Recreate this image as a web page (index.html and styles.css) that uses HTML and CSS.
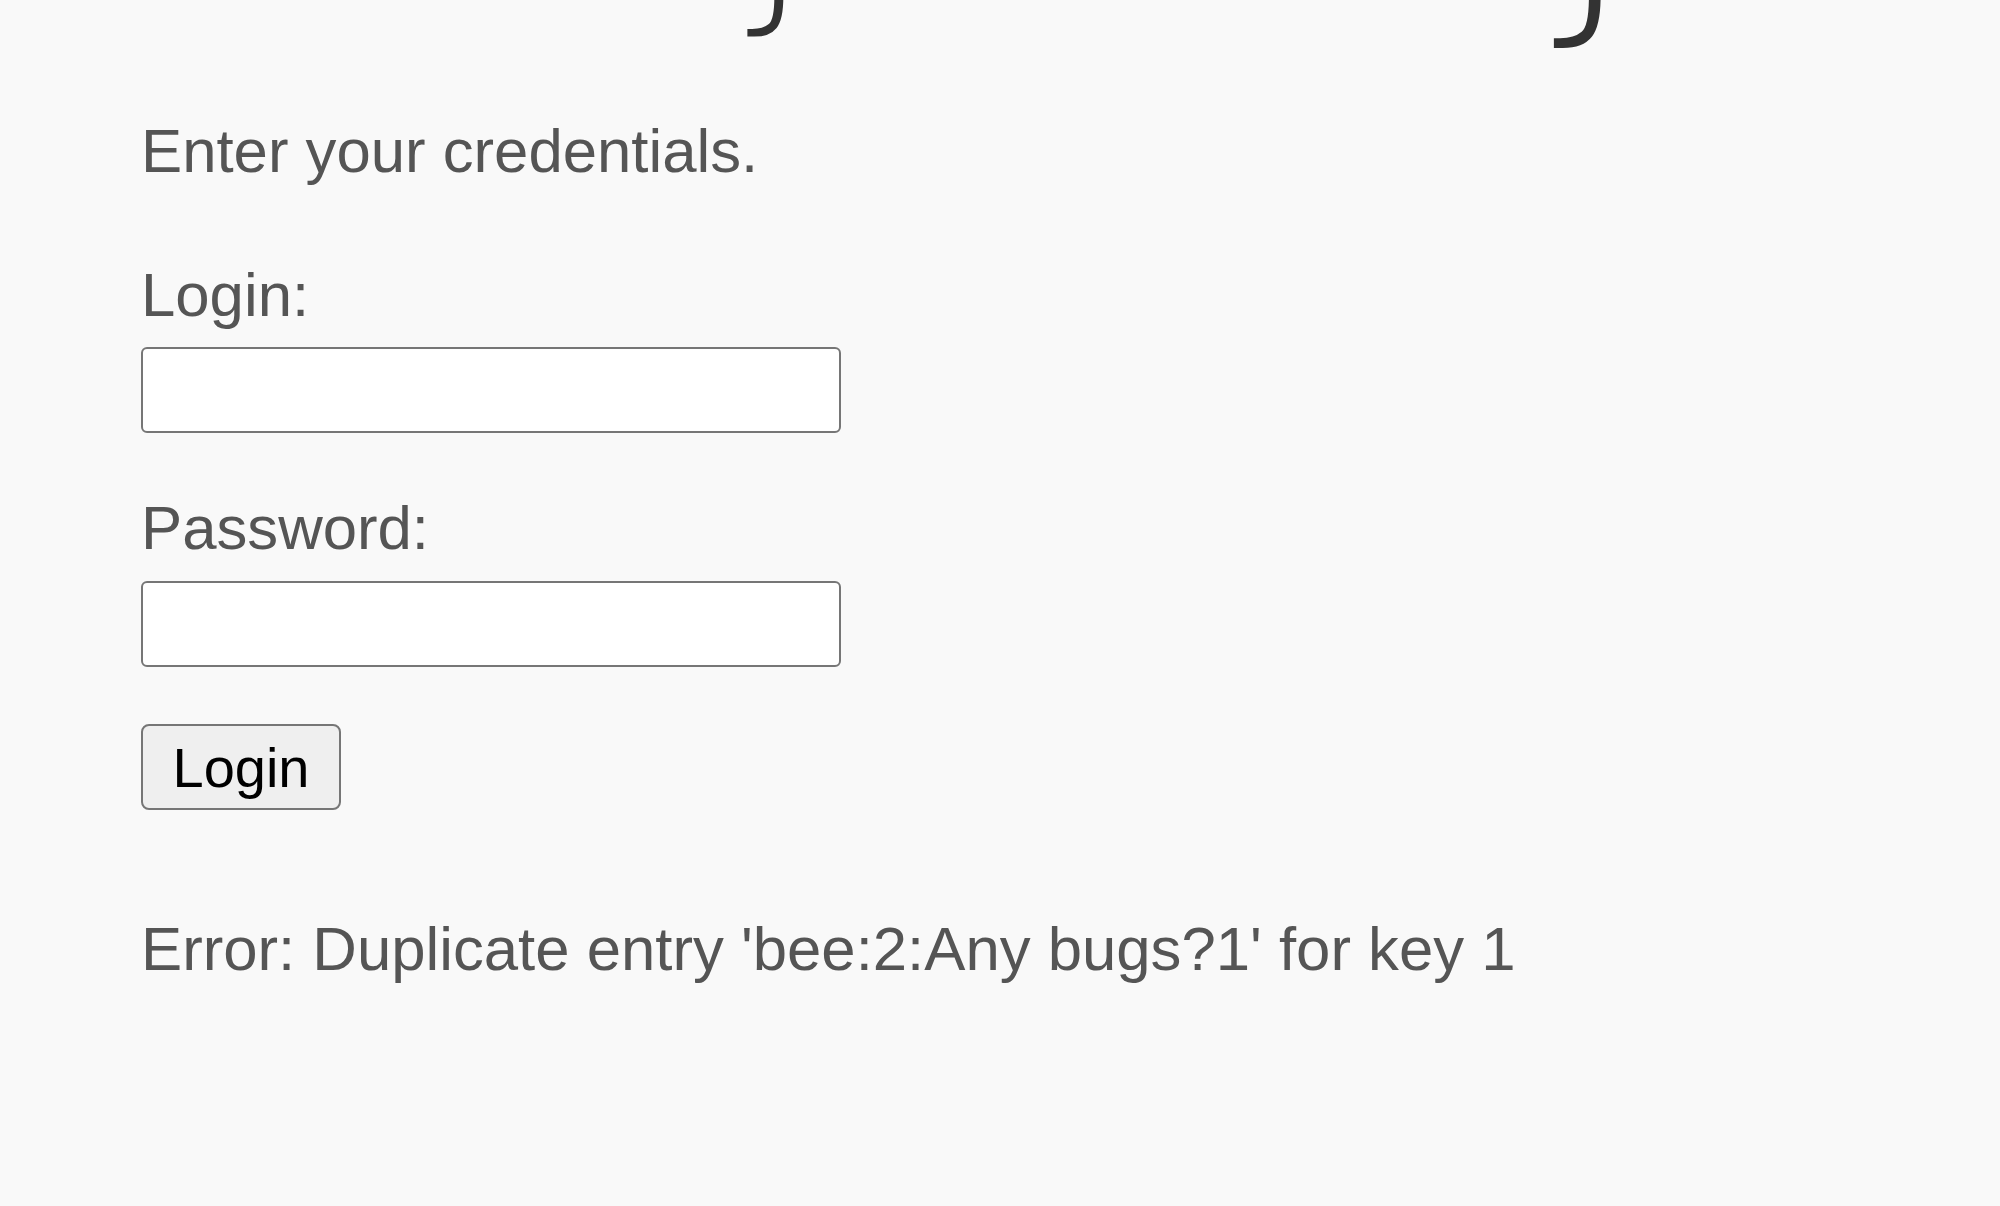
FILE: index.html
```html
<!DOCTYPE html>
<html>
<head>
<meta charset="utf-8">
<title>Login</title>
<link rel="stylesheet" href="styles.css">
</head>
<body>
<div class="page">
  <div class="heading-clip">
    <h1 class="heading"><span class="h-first">j</span><span class="h-second">j</span></h1>
  </div>
  <div class="main">
    <p class="intro">Enter your credentials.</p>
    <form class="form" action="#" method="post">
      <label class="label" for="login">Login:</label>
      <input class="field" type="text" id="login" name="login" autocomplete="off">
      <label class="label label-pass" for="password">Password:</label>
      <input class="field field-pass" type="password" id="password" name="password" autocomplete="off">
      <button class="btn" type="submit">Login</button>
    </form>
    <p class="error">Error: Duplicate entry 'bee:2:Any bugs?1' for key 1</p>
  </div>
</div>
</body>
</html>
```
FILE: styles.css
```css
html, body {
  margin: 0;
  padding: 0;
}
body {
  background: #f9f9f9;
  font-family: "Liberation Sans", Arial, sans-serif;
  color: #555555;
}
.page {
  width: 2000px;
  height: 1206px;
  overflow: hidden;
}
.heading-clip {
  height: 50px;
  overflow: hidden;
}
.heading {
  margin: 0;
  display: flex;
  align-items: flex-start;
  font-family: "DejaVu Sans", sans-serif;
  font-weight: 200;
  color: #333333;
  line-height: 1;
}
.h-first {
  display: block;
  font-size: 200px;
  margin-top: -174px;
  margin-left: 751px;
}
.h-second {
  display: block;
  font-size: 260px;
  margin-top: -226px;
  margin-left: 752px;
}
.main {
  padding-left: 141px;
}
.intro {
  margin: 65px 0 0 0;
  font-size: 61.7px;
  line-height: 71px;
}
.form {
  display: flex;
  flex-direction: column;
  align-items: flex-start;
}
.label {
  display: block;
  margin-top: 73px;
  font-size: 61.7px;
  line-height: 71px;
}
.label-pass {
  margin-top: 59px;
}
.field {
  box-sizing: border-box;
  width: 700px;
  height: 86px;
  margin: 17px 0 0 0;
  border: 2px solid #767676;
  border-radius: 6px;
  background: #ffffff;
  font-size: 52px;
  padding: 0 8px;
}
.field-pass {
  margin-top: 18px;
}
.btn {
  box-sizing: border-box;
  width: 200px;
  height: 86px;
  margin-top: 57px;
  padding: 0;
  border: 2px solid #767676;
  border-radius: 8px;
  background: #efefef;
  color: #000000;
  font-family: "Liberation Sans", Arial, sans-serif;
  font-size: 56px;
}
.error {
  margin: 103px 0 0 0;
  font-size: 61.7px;
  line-height: 71px;
}
```
